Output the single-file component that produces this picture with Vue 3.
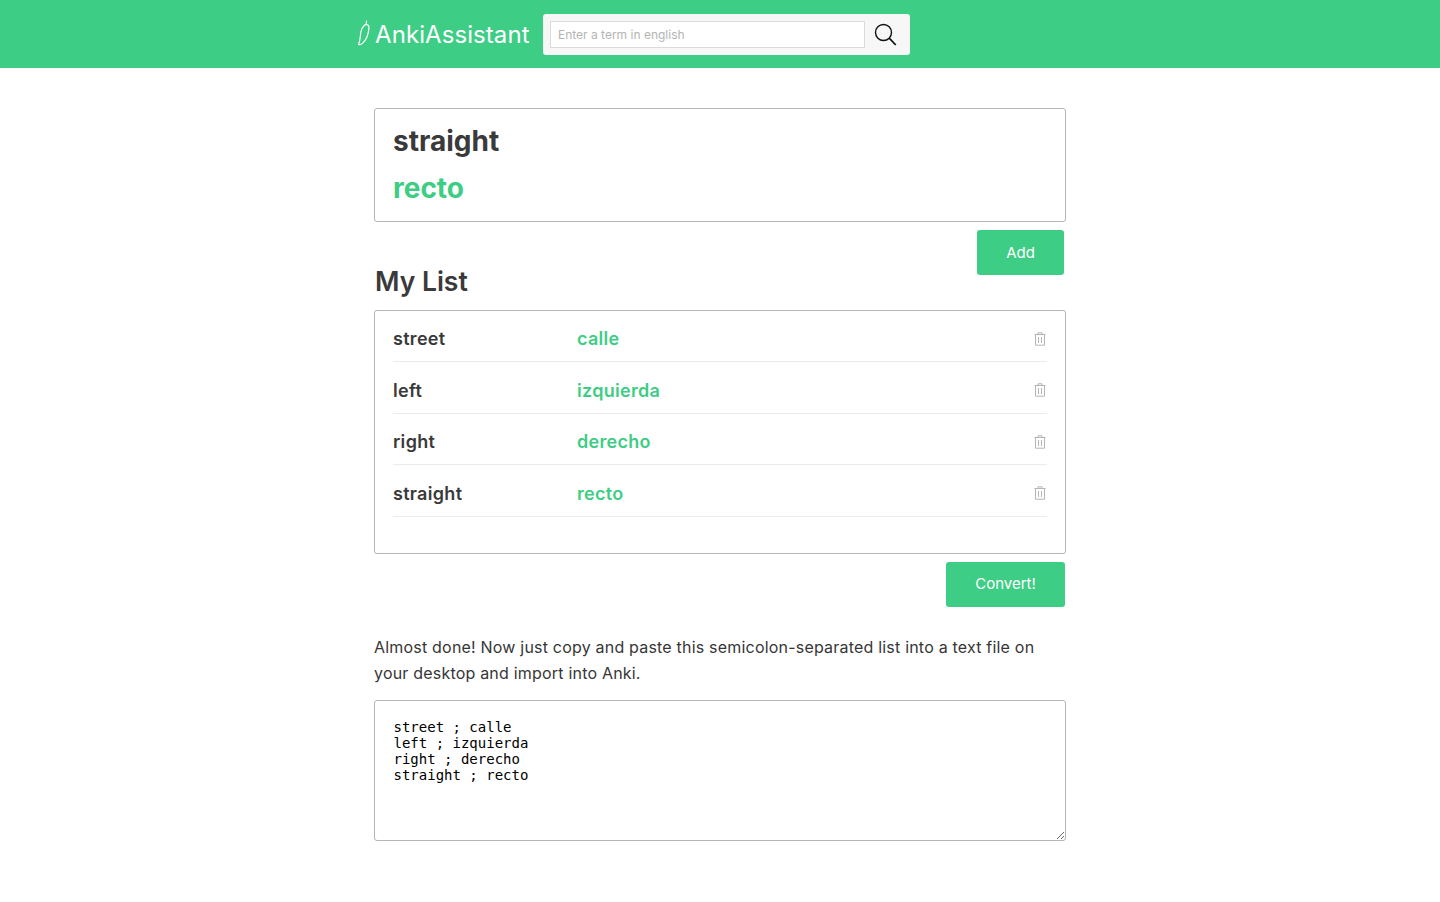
<template>
  <div class="page">
    <header class="topbar">
      <div class="topbar-inner">
        <a class="brand">
          <svg class="brand-icon" width="14" height="26" viewBox="0 0 14 26" fill="none" stroke="#fff" stroke-width="1.2" stroke-linecap="round" stroke-linejoin="round">
            <path d="M9.6 1 L9 4.4" />
            <path d="M7.4 5.2 C8.4 4.2 10.8 4.4 11.6 5.6 C12.4 7.2 11.8 10 11.2 12.8 C10.2 17 8 21.6 4.4 24 C3 24.8 1.4 25 1.6 24 C3.2 20.8 3.2 16.4 3.8 12.4 C4.2 9.6 5.8 6.6 7.4 5.2 Z" />
          </svg>
          <span class="brand-name">AnkiAssistant</span>
        </a>
        <form class="search" @submit.prevent>
          <input class="search-input" type="text" placeholder="Enter a term in english" />
          <button class="search-btn" type="submit" aria-label="Search">
            <svg width="24" height="24" viewBox="0 0 24 24" fill="none" stroke="#111" stroke-width="1.4">
              <circle cx="9.5" cy="9.5" r="8" />
              <path d="M15.2 15.2 L21.8 22" stroke-width="1.7" />
            </svg>
          </button>
        </form>
      </div>
    </header>

    <main class="content">
      <section class="card result">
        <div class="result-term">straight</div>
        <div class="result-trans">recto</div>
      </section>

      <div class="add-row">
        <h2 class="list-title">My List</h2>
        <button class="btn btn-add">Add</button>
      </div>

      <section class="card list">
        <div v-for="item in items" :key="item.term" class="list-row">
          <span class="row-term">{{ item.term }}</span>
          <span class="row-trans">{{ item.trans }}</span>
          <svg class="trash" width="12" height="14" viewBox="0 0 12 14" fill="none" stroke="#b4b4b4" stroke-width="1">
            <path d="M0.5 2.5 H11.5" />
            <path d="M4 2.5 V0.8 H8 V2.5" />
            <path d="M1.5 2.5 V13.2 H10.5 V2.5" />
            <path d="M4.5 5 V11 M7.5 5 V11" />
          </svg>
        </div>
      </section>

      <div class="convert-row">
        <button class="btn btn-convert">Convert!</button>
      </div>

      <p class="hint">
        Almost done! Now just copy and paste this semicolon-separated list into a text file on your desktop and import into Anki.
      </p>

      <textarea class="output" :value="output" readonly></textarea>
    </main>
  </div>
</template>

<script setup>
import { computed, ref } from 'vue';

const items = ref([
  { term: 'street', trans: 'calle' },
  { term: 'left', trans: 'izquierda' },
  { term: 'right', trans: 'derecho' },
  { term: 'straight', trans: 'recto' },
]);

const output = computed(() =>
  items.value.map((i) => `${i.term} ; ${i.trans}`).join('\n')
);
</script>

<style>
html,
body {
  margin: 0;
  background: #fff;
}
</style>

<style scoped>
.page {
  font-family: Inter, "Open Sans", sans-serif;
  color: #363636;
  min-height: 902px;
}

/* top bar */
.topbar {
  height: 68px;
  background: #3ecd84;
}

.topbar-inner {
  display: flex;
  align-items: center;
  height: 100%;
  padding-left: 357px;
}

.brand {
  display: flex;
  align-items: center;
  width: 186px;
  color: #fff;
}

.brand-icon {
  flex: none;
  margin-right: 4px;
  margin-top: -2px;
}

.brand-name {
  font-size: 24px;
  font-weight: 400;
  letter-spacing: 0.08px;
  white-space: nowrap;
}

.search {
  display: flex;
  align-items: center;
  width: 367px;
  height: 41px;
  box-sizing: border-box;
  padding-left: 7px;
  background: #f7f7f7;
  border-radius: 3px;
}

.search-input {
  width: 315px;
  height: 27px;
  box-sizing: border-box;
  padding: 0 7px;
  border: 1px solid #dbdbdb;
  background: #fff;
  font-family: inherit;
  font-size: 12px;
  outline: none;
}

.search-input::placeholder {
  color: #b4b4b4;
}

.search-btn {
  display: flex;
  padding: 0;
  margin-left: 9px;
  margin-top: 1px;
  border: none;
  background: none;
}

/* cards */
.content {
  width: 692px;
  margin: 0 auto;
  padding-top: 40px;
}

.card {
  box-sizing: border-box;
  border: 1px solid #b5b5b5;
  border-radius: 3px;
  background: #fff;
}

.result {
  height: 114px;
  padding: 15px 18px;
}

.result-term {
  font-size: 28px;
  line-height: 34px;
  font-weight: 700;
  color: #3a3a3a;
}

.result-trans {
  margin-top: 13px;
  font-size: 28px;
  line-height: 34px;
  font-weight: 700;
  color: #3ecd84;
}

.add-row {
  display: flex;
  justify-content: space-between;
  align-items: flex-start;
  height: 88px;
  padding-right: 2px;
}

.list-title {
  margin: 39px 0 0 1px;
  font-size: 26.5px;
  line-height: 40px;
  font-weight: 600;
  color: #3a3a3a;
}

.btn {
  height: 45px;
  border: none;
  border-radius: 3px;
  background: #3ecd84;
  color: #fff;
  font-family: inherit;
  font-size: 15px;
  cursor: pointer;
}

.btn-add {
  width: 87px;
  margin-top: 8px;
}

.btn-convert {
  width: 119px;
  padding-bottom: 3px;
}

/* list */
.list {
  height: 244px;
  padding: 0 18px;
}

.list-row {
  display: flex;
  align-items: center;
  height: 51.5px;
  box-sizing: border-box;
  padding-top: 5.5px;
  border-bottom: 1px solid #ebebeb;
  font-size: 18px;
  font-weight: 600;
  letter-spacing: 0.3px;
}

.list-row:first-child {
  height: 51.25px;
}

.row-term {
  width: 184px;
  color: #3a3a3a;
}

.row-trans {
  flex: 1;
  color: #3ecd84;
}

.trash {
  margin-right: 1.5px;
}

.convert-row {
  display: flex;
  justify-content: flex-end;
  margin-top: 8px;
  margin-right: 1px;
}

.hint {
  margin: 27px 0 0;
  font-size: 16px;
  line-height: 26px;
  letter-spacing: 0.2px;
  color: #363636;
}

.output {
  display: block;
  width: 692px;
  height: 141px;
  box-sizing: border-box;
  margin-top: 14px;
  padding: 18px 18.5px;
  border: 1px solid #b5b5b5;
  border-radius: 3px;
  font-family: "DejaVu Sans Mono", monospace;
  font-size: 14px;
  line-height: 16px;
  color: #000;
  outline: none;
}
</style>
